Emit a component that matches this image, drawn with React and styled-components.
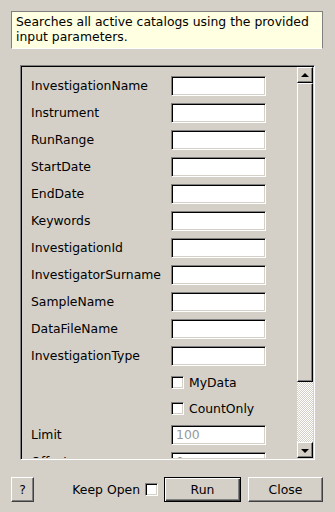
import styled, { createGlobalStyle } from 'styled-components';

const GlobalStyle = createGlobalStyle`
	html, body {
		margin: 0;
		padding: 0;
		background: #d4d0c8;
	}
	body {
		font-family: 'DejaVu Sans', 'Liberation Sans', sans-serif;
		font-size: 12.4px;
		color: #000;
	}
`;

const Frame = styled.div`
	width: 335px;
	height: 512px;
	box-sizing: border-box;
	padding: 11px 12px 0 11px;
	display: flex;
	flex-direction: column;
	background: #d4d0c8;
`;

const Tooltip = styled.div`
	height: 38px;
	box-sizing: border-box;
	padding: 2px 4px 0 4px;
	background: #ffffe1;
	border-top: 1px solid #808080;
	border-left: 1px solid #808080;
	border-right: 1px solid #808080;
	border-bottom: 1px solid #ffffff;
	line-height: 15px;
	white-space: nowrap;
`;

const ScrollPane = styled.div`
	margin: 16px 8px 0 9px;
	height: 395px;
	box-sizing: border-box;
	display: flex;
	border-top: 1px solid #808080;
	border-left: 1px solid #808080;
	border-right: 1px solid #ffffff;
	border-bottom: 1px solid #ffffff;
	box-shadow: inset 1px 1px 0 #000, inset -1px -1px 0 #d4d0c8;
	padding: 1px;
`;

const Viewport = styled.div`
	flex: 1;
	overflow: hidden;
	padding: 9px 0 0 9px;
`;

const Form = styled.div`
	display: grid;
	grid-template-columns: 140px 95px;
	row-gap: 7px;
	align-items: center;
`;

const Label = styled.div`
	grid-column: 1;
	line-height: 20px;
	white-space: nowrap;
`;

const Field = styled.div`
	grid-column: 2;
	height: 20px;
	box-sizing: border-box;
	background: #fff;
	border-top: 1px solid #808080;
	border-left: 1px solid #808080;
	border-right: 1px solid #fff;
	border-bottom: 1px solid #fff;
	box-shadow: inset 1px 1px 0 #000, inset -1px -1px 0 #d4d0c8;
	padding: 0 4px;
	line-height: 18px;
	color: ${(p) => (p.$hint ? '#999' : '#000')};
`;

const CheckRow = styled.div`
	grid-column: 2;
	display: flex;
	align-items: center;
	gap: 5px;
	height: 19px;
	white-space: nowrap;
`;

const Box = styled.span`
	display: inline-block;
	width: 13px;
	height: 13px;
	box-sizing: border-box;
	background: #fff;
	border-top: 1px solid #808080;
	border-left: 1px solid #808080;
	border-right: 1px solid #fff;
	border-bottom: 1px solid #fff;
	box-shadow: inset 1px 1px 0 #000, inset -1px -1px 0 #d4d0c8;
`;

const ScrollBar = styled.div`
	width: 16px;
	display: flex;
	flex-direction: column;
`;

const Raised = styled.div`
	box-sizing: border-box;
	background: #d4d0c8;
	border-top: 1px solid #fff;
	border-left: 1px solid #fff;
	border-right: 1px solid #000;
	border-bottom: 1px solid #000;
	box-shadow: inset -1px -1px 0 #808080;
`;

const ArrowButton = styled(Raised)`
	height: 16px;
	display: flex;
	align-items: center;
	justify-content: center;

	&::after {
		content: '';
		width: 0;
		height: 0;
		border-left: 4px solid transparent;
		border-right: 4px solid transparent;
		${(p) =>
			p.$down
				? 'border-top: 4px solid #000; margin-top: 1px;'
				: 'border-bottom: 4px solid #000; margin-top: -1px;'}
	}
`;

const Thumb = styled(Raised)`
	height: 299px;
`;

const Track = styled.div`
	flex: 1;
	background: repeating-conic-gradient(#fff 0 25%, #d4d0c8 0 50%) 0 0 / 2px 2px;
`;

const Footer = styled.div`
	margin-top: 17px;
	display: flex;
	align-items: center;
	height: 25px;
`;

const Button = styled.button`
	height: 25px;
	width: ${(p) => p.$w}px;
	box-sizing: border-box;
	padding: 0;
	margin: 0;
	font-family: 'DejaVu Sans', 'Liberation Sans', sans-serif;
	font-size: 12.4px;
	color: #000;
	background: #d4d0c8;
	border-top: 1px solid #fff;
	border-left: 1px solid #fff;
	border-right: 1px solid #404040;
	border-bottom: 1px solid #404040;
	box-shadow: inset -1px -1px 0 #808080;
	${(p) =>
		p.$default &&
		`
		border: 1px solid #000;
		box-shadow: inset 1px 1px 0 #fff, inset -1px -1px 0 #404040, inset -2px -2px 0 #808080;
	`}
`;

const KeepOpen = styled.label`
	margin-left: auto;
	display: flex;
	align-items: center;
	gap: 5px;
	margin-right: 6px;
	white-space: nowrap;
`;

const Spacer = styled.div`
	width: 7px;
`;

const fields = [
	'InvestigationName',
	'Instrument',
	'RunRange',
	'StartDate',
	'EndDate',
	'Keywords',
	'InvestigationId',
	'InvestigatorSurname',
	'SampleName',
	'DataFileName',
	'InvestigationType',
];

const App = () => {
	return (
		<>
			<GlobalStyle />
			<Frame>
				<Tooltip>
					Searches all active catalogs using the provided
					<br />
					input parameters.
				</Tooltip>
				<ScrollPane>
					<Viewport>
						<Form>
							{fields.flatMap((name) => [
								<Label key={name}>{name}</Label>,
								<Field key={name + '-f'} />,
							])}
							<CheckRow>
								<Box />
								MyData
							</CheckRow>
							<CheckRow>
								<Box />
								CountOnly
							</CheckRow>
							<Label>Limit</Label>
							<Field $hint>100</Field>
							<Label>Offset</Label>
							<Field $hint>0</Field>
						</Form>
					</Viewport>
					<ScrollBar>
						<ArrowButton />
						<Thumb />
						<Track />
						<ArrowButton $down />
					</ScrollBar>
				</ScrollPane>
				<Footer>
					<Button $w={23}>?</Button>
					<KeepOpen>
						Keep Open
						<Box />
					</KeepOpen>
					<Button $w={77} $default>
						Run
					</Button>
					<Spacer />
					<Button $w={75}>Close</Button>
				</Footer>
			</Frame>
		</>
	);
};

export default App;
